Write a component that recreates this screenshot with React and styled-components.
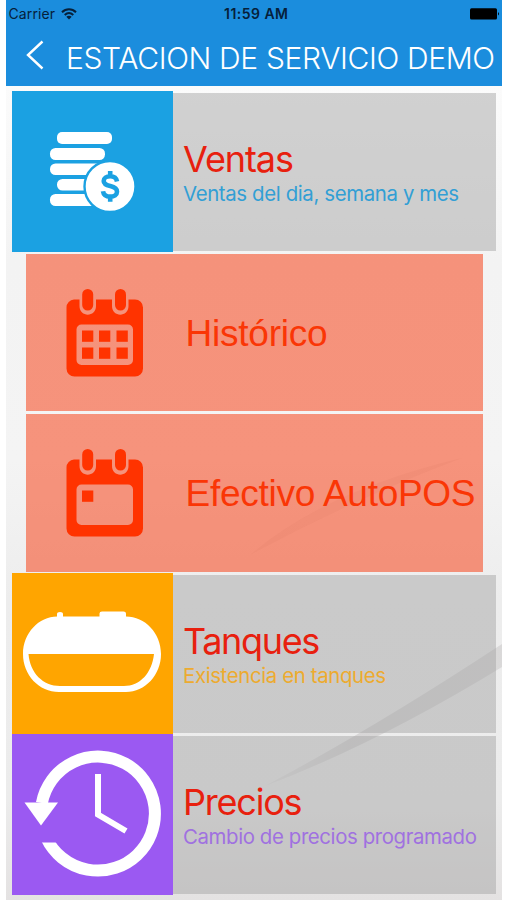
import React from "react";
import styled, { createGlobalStyle } from "styled-components";

const GlobalStyle = createGlobalStyle`
  * { box-sizing: border-box; }
  body { margin: 0; background: #fff; font-family: Inter, "Liberation Sans", sans-serif; }
`;

const Screen = styled.main`
  position: relative;
  width: 496px;
  height: 900px;
  margin-left: 6px;
  overflow: hidden;
  background: linear-gradient(180deg, #fbfbfb 86px, #f3f3f3 260px, #f4f4f4 460px, #ededed 600px, #ececec 800px, #e4e2e2 900px);
`;

const Backdrop = styled.svg`
  position: absolute;
  inset: 0;
  width: 496px;
  height: 900px;
`;

const Header = styled.header`
  position: relative;
  height: 86px;
  background: #1b8ddd;
`;

const StatusBar = styled.div`
  display: grid;
  grid-template-columns: 1fr auto 1fr;
  align-items: center;
  height: 27px;
  padding: 0 2px 0 2.5px;
  color: #06203a;
  font-size: 14px;
`;

const Carrier = styled.div`
  display: flex;
  align-items: center;
  gap: 6px;
  letter-spacing: 0.1px;
`;

const Clock = styled.div`
  font-weight: 600;
  letter-spacing: 0.45px;
  padding-left: 4px;
`;

const Battery = styled.svg`
  justify-self: end;
`;

const NavBar = styled.div`
  display: flex;
  align-items: center;
  height: 59px;
  padding-left: 20px;
`;

const BackIcon = styled.svg`
  flex: none;
  margin: -4px 22px 0 0;
`;

const Title = styled.h1`
  margin: 3px 0 0;
  color: #fff;
  font-size: 30px;
  font-weight: 340;
  line-height: 36px;
  letter-spacing: ${(p) => p.$spacing}px;
  white-space: nowrap;
`;

const Menu = styled.nav`
  position: relative;
  display: flex;
  flex-direction: column;
  padding: 5px 6px 0;
`;

const Card = styled.section`
  display: flex;
  align-items: center;
  height: 161px;
`;

const Tile = styled.div`
  display: flex;
  flex: none;
  width: 161px;
  height: 161px;
  background: ${(p) => p.$color};
`;

const Panel = styled.div`
  flex: 1;
  height: 158px;
  padding: 46px 0 0 10px;
  background: rgba(164, 164, 164, 0.48);
`;

const CardTitle = styled.h2`
  margin: 0;
  color: #e8200e;
  font-size: 36px;
  font-weight: 400;
  line-height: 40px;
  letter-spacing: ${(p) => p.$spacing}px;
  white-space: nowrap;
`;

const CardText = styled.p`
  margin: 2px 0 0;
  color: ${(p) => p.$color};
  font-size: 20.4px;
  line-height: 25px;
  letter-spacing: ${(p) => p.$spacing}px;
  white-space: nowrap;
`;

const SubMenu = styled.div`
  display: flex;
  flex-direction: column;
  gap: 3px;
  padding: 1.5px 13.5px 1.5px;
  height: 321px;
`;

const SubItem = styled.section`
  display: flex;
  flex: 1;
  align-items: center;
  background: rgba(248, 52, 8, 0.51);
`;

const SubLabel = styled.span`
  padding-top: 3px;
  color: #fa3606;
  font-family: "Liberation Sans", Arial, sans-serif;
  font-size: 37px;
  line-height: 42px;
  letter-spacing: ${(p) => p.$spacing}px;
  white-space: nowrap;
`;

const Glyph = styled.svg`
  flex: none;
  display: block;
`;

function CoinsIcon() {
  return (
    <Glyph width="161" height="161" viewBox="0 0 161 161" fill="#fff">
      <rect x="45" y="41" width="55" height="12" rx="5" />
      <rect x="38" y="57" width="55" height="12" rx="5.5" />
      <rect x="38" y="72.5" width="55" height="11.5" rx="5.5" />
      <rect x="45" y="88" width="50" height="11.5" rx="5.5" />
      <rect x="38" y="103" width="55" height="12" rx="5.5" />
      <circle cx="98" cy="95.5" r="25.5" stroke="#1ba1e2" strokeWidth="2.4" />
      <path d="M105 90.5C104.400 87 101.800 85.300 98.200 85.300C94.400 85.300 91.700 87.200 91.700 90C91.700 93 94.400 94.200 98.300 95.100C102.500 96.100 105 97.700 105 100.700C105 103.800 102.200 105.600 98.200 105.600C94.200 105.600 91.500 103.800 91 100.200M98.200 80V85M98.200 105V110.800" fill="none" stroke="#1ba1e2" strokeWidth="4.600" />
    </Glyph>
  );
}

const CELLS = [
  [15.5, 41.5], [32.5, 41.5], [50, 41.5],
  [15.5, 58.5], [32.5, 58.5], [50, 58.5],
];

function CalendarIcon({ cells }) {
  return (
    <Glyph width="160" height="89" viewBox="-40.5 -1 160 89" fill="#ff3300">
      <path fillRule="evenodd" d="M7.500 10.500H13V17C13 28.500 29.500 28.500 29.500 17V10.500H45.500V17C45.500 28.500 62 28.500 62 17V10.500H68.500A8 8 0 0 1 76.500 18.500V79.500A8 8 0 0 1 68.500 87.500H8A8 8 0 0 1 0 79.500V18.500A8 8 0 0 1 7.500 10.500ZM15 35.500A5 5 0 0 0 10 40.500V71A5 5 0 0 0 15 76H61.500A5 5 0 0 0 66.500 71V40.500A5 5 0 0 0 61.500 35.500Z" />
      <rect x="15.700" y="0" width="11" height="21.500" rx="5.500" />
      <rect x="48.500" y="0" width="11" height="21.500" rx="5.500" />
      {CELLS.slice(0, cells).map(([x, y]) => (
        <rect key={`${x}-${y}`} x={x} y={y} width="11.300" height="11.300" />
      ))}
    </Glyph>
  );
}

function TankIcon() {
  return (
    <Glyph width="161" height="161" viewBox="0 0 161 161" fill="#fff">
      <path fillRule="evenodd" d="M45 43.500V41Q45 39 48 39Q51 39 51 41V43.500H87.500V40.500Q87.500 38.500 90 38.500H111.500Q114 38.500 114 40.500V43.500C133 43.500 149 60 149 81S133 119 114 119H47C27 119 11 102 11 81S27 43.500 45 43.500ZM16.500 81C18 100 31 113 48 113H112C128 113 140 100 142 81Z" />
    </Glyph>
  );
}

function HistoryIcon() {
  return (
    <Glyph width="161" height="161" viewBox="0 0 161 161">
      <path d="M29.900 69A57 57 0 1 1 34.400 104" fill="none" stroke="#fff" strokeWidth="12" />
      <path d="M12.500 68.500H46L29 91.500Z" fill="#fff" />
      <rect x="22" y="94" width="28" height="14.500" fill="#9b59f2" />
      <path d="M86 40V80.500L114 97" fill="none" stroke="#fff" strokeWidth="6" />
    </Glyph>
  );
}

function MenuCard({ color, icon, title, titleSpacing, text, textColor, textSpacing }) {
  return (
    <Card>
      <Tile $color={color}>{icon}</Tile>
      <Panel>
        <CardTitle $spacing={titleSpacing}>{title}</CardTitle>
        <CardText $color={textColor} $spacing={textSpacing}>{text}</CardText>
      </Panel>
    </Card>
  );
}

export default function App() {
  return (
    <>
      <GlobalStyle />
      <Screen>
        <Backdrop viewBox="0 0 496 900">
          <defs>
            <linearGradient id="ray" x1="0" x2="1">
              <stop offset="0" stopColor="#a9a5a6" stopOpacity="0.1" />
              <stop offset="0.35" stopColor="#a9a5a6" stopOpacity="0.32" />
              <stop offset="1" stopColor="#a9a5a6" stopOpacity="0.28" />
            </linearGradient>
          </defs>
          <path d="M259 786Q370 727 496 644V667Q370 744 259 786Z" fill="url(#ray)" />
          <path d="M244 555Q320 490 456 458Q350 498 244 555Z" fill="#8c8c8c" opacity="0.07" />
        </Backdrop>
        <Header>
          <StatusBar>
            <Carrier>
              Carrier
              <svg width="16" height="12" viewBox="0 0 16 12" fill="none" stroke="#06203a" strokeWidth="2">
                <path d="M1 4.200C5 .2 11 .2 15 4.200M3.700 7C6.300 4.600 9.700 4.600 12.300 7" />
                <path d="M8 11.500L5.300 8.800Q8 6.800 10.700 8.800Z" fill="#06203a" stroke="none" />
              </svg>
            </Carrier>
            <Clock>11:59 AM</Clock>
            <Battery width="30" height="12" viewBox="0 0 30 12">
              <rect x="0" y="0.200" width="27" height="11.300" rx="1.500" />
              <path d="M28 4Q30 5.800 28 7.600Z" />
            </Battery>
          </StatusBar>
          <NavBar>
            <BackIcon width="18" height="30" viewBox="0 0 18 30" fill="none" stroke="#fff" strokeWidth="2.400">
              <path d="M16.500 1.500L2 15L16.500 28.500" />
            </BackIcon>
            <Title $spacing={-0.36}>ESTACION DE SERVICIO DEMO</Title>
          </NavBar>
        </Header>
        <Menu>
          <MenuCard color="#1ba1e2" icon={<CoinsIcon />} title="Ventas" titleSpacing={-1.1} text="Ventas del dia, semana y mes" textColor="#329fd5" textSpacing={-0.37} />
          <SubMenu>
            <SubItem>
              <CalendarIcon cells={6} />
              <SubLabel $spacing={-0.22}>Histórico</SubLabel>
            </SubItem>
            <SubItem>
              <CalendarIcon cells={1} />
              <SubLabel $spacing={-0.27}>Efectivo AutoPOS</SubLabel>
            </SubItem>
          </SubMenu>
          <MenuCard color="#ffa500" icon={<TankIcon />} title="Tanques" titleSpacing={-1.35} text="Existencia en tanques" textColor="#edab2f" textSpacing={-0.37} />
          <MenuCard color="#9b59f2" icon={<HistoryIcon />} title="Precios" titleSpacing={-1.2} text="Cambio de precios programado" textColor="#a071e0" textSpacing={-0.39} />
        </Menu>
      </Screen>
    </>
  );
}
